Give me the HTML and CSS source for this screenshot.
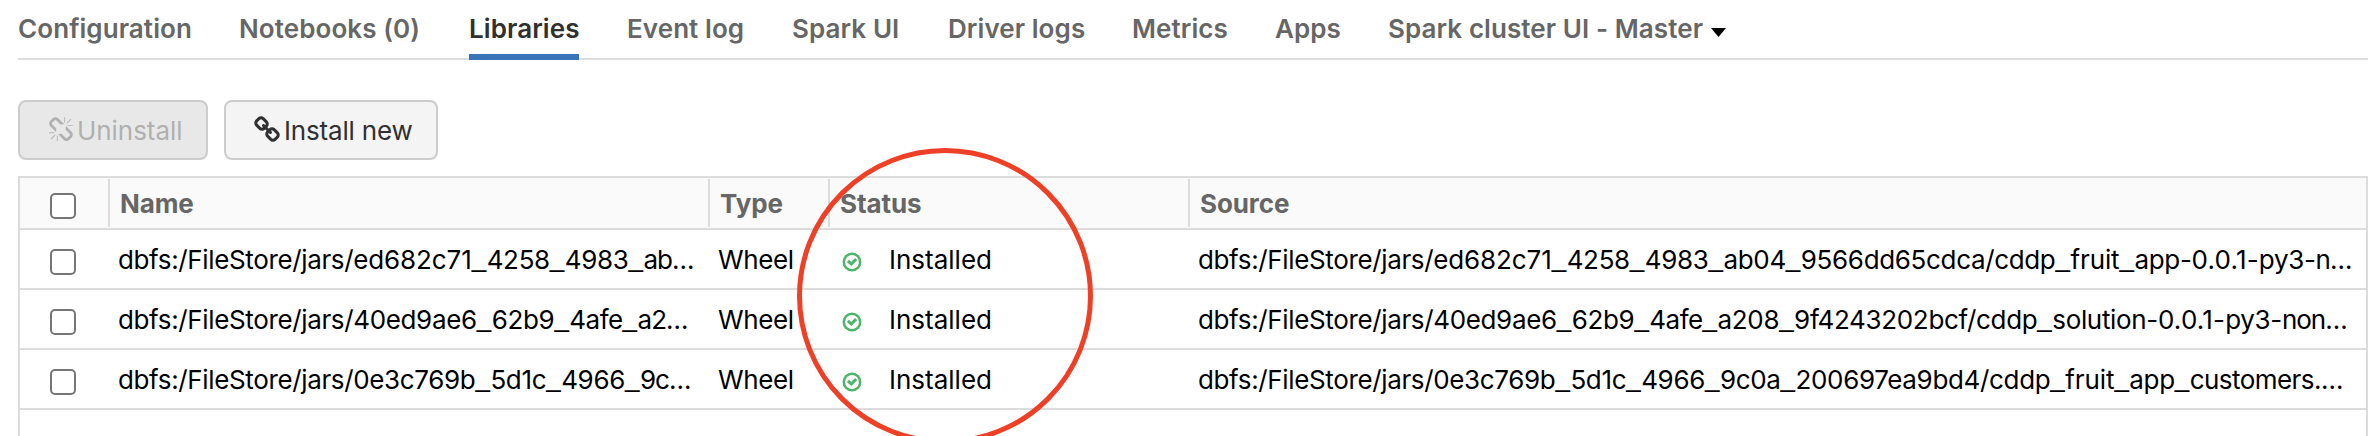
FILE: index.html
```html
<!DOCTYPE html>
<html lang="en">
<head>
<meta charset="utf-8">
<title>Cluster libraries</title>
<link rel="stylesheet" href="styles.css">
</head>
<body>
<svg class="sprite" aria-hidden="true">
  <symbol id="ok" viewBox="0 0 20 20">
    <circle cx="10" cy="10" r="8.2" fill="none" stroke="currentColor" stroke-width="2.5"/>
    <path d="M5.9 8.900 9.200 12 14.200 7.100" fill="none" stroke="currentColor" stroke-width="3"/>
  </symbol>
</svg>
<nav class="tabs">
  <a class="tab t1">Configuration</a>
  <a class="tab t2">Notebooks (0)</a>
  <a class="tab t3 active">Libraries</a>
  <a class="tab t4">Event log</a>
  <a class="tab t5">Spark UI</a>
  <a class="tab t6">Driver logs</a>
  <a class="tab t7">Metrics</a>
  <a class="tab t8">Apps</a>
  <a class="tab t9">Spark cluster UI - Master</a>
  <svg class="caret" viewBox="0 0 15 9"><path d="M0 0h15L7.5 9z"/></svg>
</nav>
<div class="actions">
  <button class="btn uninstall" disabled><svg class="broken" viewBox="0 0 1792 1792"><path d="M503 1271l-256 256q-10 9-23 9-12 0-23-9-9-10-9-23t9-23l256-256q10-9 23-9t23 9q9 10 9 23t-9 23zm169 41v320q0 14-9 23t-23 9-23-9-9-23v-320q0-14 9-23t23-9 23 9 9 23zm-224-224q0 14-9 23t-23 9h-320q-14 0-23-9t-9-23 9-23 23-9h320q14 0 23 9t9 23zm1264 128q0 120-85 203l-147 146q-83 83-203 83-121 0-204-85l-334-335q-21-21-42-56l239-18 273 274q28 28 68 28.500t68-27.500l147-146q28-28 28-67 0-40-28-68l-274-275 18-239q35 21 56 42l336 336q84 86 84 204zm-617-724l-239 18-273-274q-28-28-68-28-39 0-68 27l-147 146q-28 28-28 67 0 40 28 68l274 274-18 240q-35-21-56-42l-336-336q-84-86-84-204 0-120 85-203l147-146q83-83 203-83 121 0 204 85l334 335q21 21 42 56zm633 84q0 14-9 23t-23 9h-320q-14 0-23-9t-9-23 9-23 23-9h320q14 0 23 9t9 23zm-544-544v320q0 14-9 23t-23 9-23-9-9-23v-320q0-14 9-23t23-9 23 9 9 23zm407 151l-256 256q-11 9-23 9t-23-9q-9-10-9-23t9-23l256-256q10-9 23-9t23 9q9 10 9 23t-9 23z"/></svg><span>Uninstall</span></button>
  <button class="btn install"><svg class="chain" viewBox="0 0 1792 1792"><path d="M1456 1216q0-40-28-68l-208-208q-28-28-68-28-42 0-72 32 3 3 19 18.500t21.500 21.500 15 19 13 25.500 3.500 27.500q0 40-28 68t-68 28q-15 0-27.500-3.500t-25.500-13-19-15-21.500-21.500-18.500-19q-33 31-33 73 0 40 28 68l206 207q27 27 68 27 40 0 68-26l147-146q28-28 28-67zm-703-705q0-40-28-68l-206-207q-28-28-68-28-39 0-68 27l-147 146q-28 28-28 67 0 40 28 68l208 208q27 27 68 27 42 0 72-31-3-3-19-18.500t-21.500-21.500-15-19-13-25.500-3.500-27.500q0-40 28-68t68-28q15 0 27.500 3.500t25.500 13 19 15 21.500 21.500 18.500 19q33-31 33-73zm895 705q0 120-85 203l-147 146q-83 83-203 83-121 0-204-85l-206-207q-83-83-83-203 0-123 88-209l-88-88q-86 88-208 88-120 0-204-84l-208-208q-84-84-84-204t85-203l147-146q83-83 203-83 121 0 204 85l206 207q83 83 83 203 0 123-88 209l88 88q86-88 208-88 120 0 204 84l208 208q84 84 84 204z"/></svg><span>Install new</span></button>
</div>
<main class="table">
  <div class="row head">
    <div class="cell pick"><span class="box"></span></div>
    <div class="cell name">Name</div>
    <div class="cell type">Type</div>
    <div class="cell status">Status</div>
    <div class="cell source">Source</div>
  </div>
  <div class="row">
    <div class="cell pick"><span class="box"></span></div>
    <div class="cell name"><span class="path"><span class="root">dbfs:/FileStore/jars/</span><span class="wide">ed682c71</span><i>_</i>4258<i>_</i>4983<i>_</i><span class="tail">ab…</span></span></div>
    <div class="cell type">Wheel</div>
    <div class="cell status"><svg class="ok"><use href="#ok"/></svg>Installed</div>
    <div class="cell source"><span class="path"><span class="root">dbfs:/FileStore/jars/</span><span class="wide">ed682c71</span><i>_</i>4258<i>_</i>4983<i>_</i>ab04<i>_</i>9566dd65cdca/cddp<i>_</i><span class="wide">fruit</span><i>_</i>app-<span class="ver">0.0.1-</span>py3-<span class="tail">n…</span></span></div>
  </div>
  <div class="row">
    <div class="cell pick"><span class="box"></span></div>
    <div class="cell name"><span class="path"><span class="root">dbfs:/FileStore/jars/</span>40ed9ae6<i>_</i>62b9<i>_</i><span class="tight">4afe</span><i>_</i><span class="tail">a2…</span></span></div>
    <div class="cell type">Wheel</div>
    <div class="cell status"><svg class="ok"><use href="#ok"/></svg>Installed</div>
    <div class="cell source"><span class="path"><span class="root">dbfs:/FileStore/jars/</span>40ed9ae6<i>_</i>62b9<i>_</i><span class="tight">4afe</span><i>_</i>a208<i>_</i>9f4243202bcf/cddp<i>_</i>solution-<span class="ver">0.0.1-</span>py3-<span class="tail">non…</span></span></div>
  </div>
  <div class="row">
    <div class="cell pick"><span class="box"></span></div>
    <div class="cell name"><span class="path"><span class="root">dbfs:/FileStore/jars/</span>0e3c769b<i>_</i>5d1c<i>_</i>4966<i>_</i><span class="tail">9c…</span></span></div>
    <div class="cell type">Wheel</div>
    <div class="cell status"><svg class="ok"><use href="#ok"/></svg>Installed</div>
    <div class="cell source"><span class="path"><span class="root">dbfs:/FileStore/jars/</span>0e3c769b<i>_</i>5d1c<i>_</i>4966<i>_</i>9c0a<i>_</i>200697ea9bd4/cddp<i>_</i><span class="wide">fruit</span><i>_</i>app<i>_</i><span class="tight">customers.…</span></span></div>
  </div>
</main>
<div class="ring"></div>
</body>
</html>
```
FILE: styles.css
```css
* { box-sizing: border-box; }
html, body { height: 436px; overflow: hidden; }
body {
  margin: 0;
  padding: 0 8px 0 18px;
  display: flex;
  flex-direction: column;
  position: relative;
  background: #fff;
  color: #000;
  font-family: Inter, "Liberation Sans", sans-serif;
  font-size: 26px;
  line-height: 32px;
}
.sprite { display: none; }
svg { flex: none; fill: currentColor; }

.tabs {
  display: flex;
  height: 60px;
  border-bottom: 2px solid #dcdcdc;
  font-weight: 600;
  color: #666;
  white-space: nowrap;
}
.tab { height: 60px; padding-top: 13px; margin-right: 48px; flex: none; letter-spacing: 0.08px; }
.t1 { width: 173px; }
.t2 { width: 182px; }
.t3 { width: 110px; }
.t4 { width: 117px; }
.t5 { width: 108px; }
.t6 { width: 136px; }
.t7 { width: 95px; }
.t8 { width: 65px; }
.t9 { width: 316px; margin-right: 7px; }
.active { color: #303030; border-bottom: 6px solid #3b73b9; }
.caret { width: 15px; height: 9px; margin-top: 28px; color: #000; }

.actions { display: flex; gap: 16px; margin-top: 40px; height: 60px; }
.btn {
  display: flex;
  align-items: center;
  height: 60px;
  border: 2px solid #ccc;
  border-radius: 8px;
  padding: 0;
  font: inherit;
  letter-spacing: -0.05px;
  white-space: nowrap;
  background: #f4f4f4;
  color: #303030;
}
.btn span { padding-top: 2px; }
.uninstall { width: 190px; padding-left: 28px; background: #e8e8e8; color: #b0b0b0; }
.install { width: 214px; padding-left: 28px; letter-spacing: -0.18px; }
.broken { width: 26px; height: 26px; margin-right: 3px; }
.chain { width: 28px; height: 28px; margin-right: 2px; }

.table {
  flex: 1;
  margin-top: 16px;
  border: 2px solid #dcdcdc;
  border-bottom: 0;
}
.row {
  display: grid;
  grid-template-columns: 88px 600px 120px 360px 1fr;
  height: 60px;
  border-bottom: 2px solid #dcdcdc;
}
.cell { display: flex; align-items: center; padding: 2px 0 0 10px; white-space: nowrap; min-width: 0; }
.type { letter-spacing: -0.4px; }
.head { height: 52px; padding: 1px 0; background: #fafafa; color: #666; font-weight: 700; }
.head .cell + .cell { border-left: 2px solid #dcdcdc; letter-spacing: -0.1px; }
.cell.pick { padding: 6px 0 0 30px; }
.box { width: 26px; height: 26px; border: 2px solid #767676; border-radius: 5px; background: #fff; }
.ok { width: 20px; height: 20px; margin: 3px 27px 0 4px; color: #4eb36b; }

.path { letter-spacing: -0.34px; }
.path i {
  font-family: "Liberation Sans", Arial, sans-serif;
  font-style: normal;
  line-height: 1;
  letter-spacing: 0.5px;
  vertical-align: 2px;
}
.root { letter-spacing: -0.36px; }
.wide { letter-spacing: -0.1px; }
.tight { letter-spacing: -0.55px; }
.tail { letter-spacing: -1px; }
.ver { letter-spacing: 0.2px; }

.ring {
  position: absolute;
  left: 797px;
  top: 148px;
  width: 296px;
  height: 296px;
  border: 5px solid #ee4026;
  border-radius: 50%;
}
```
